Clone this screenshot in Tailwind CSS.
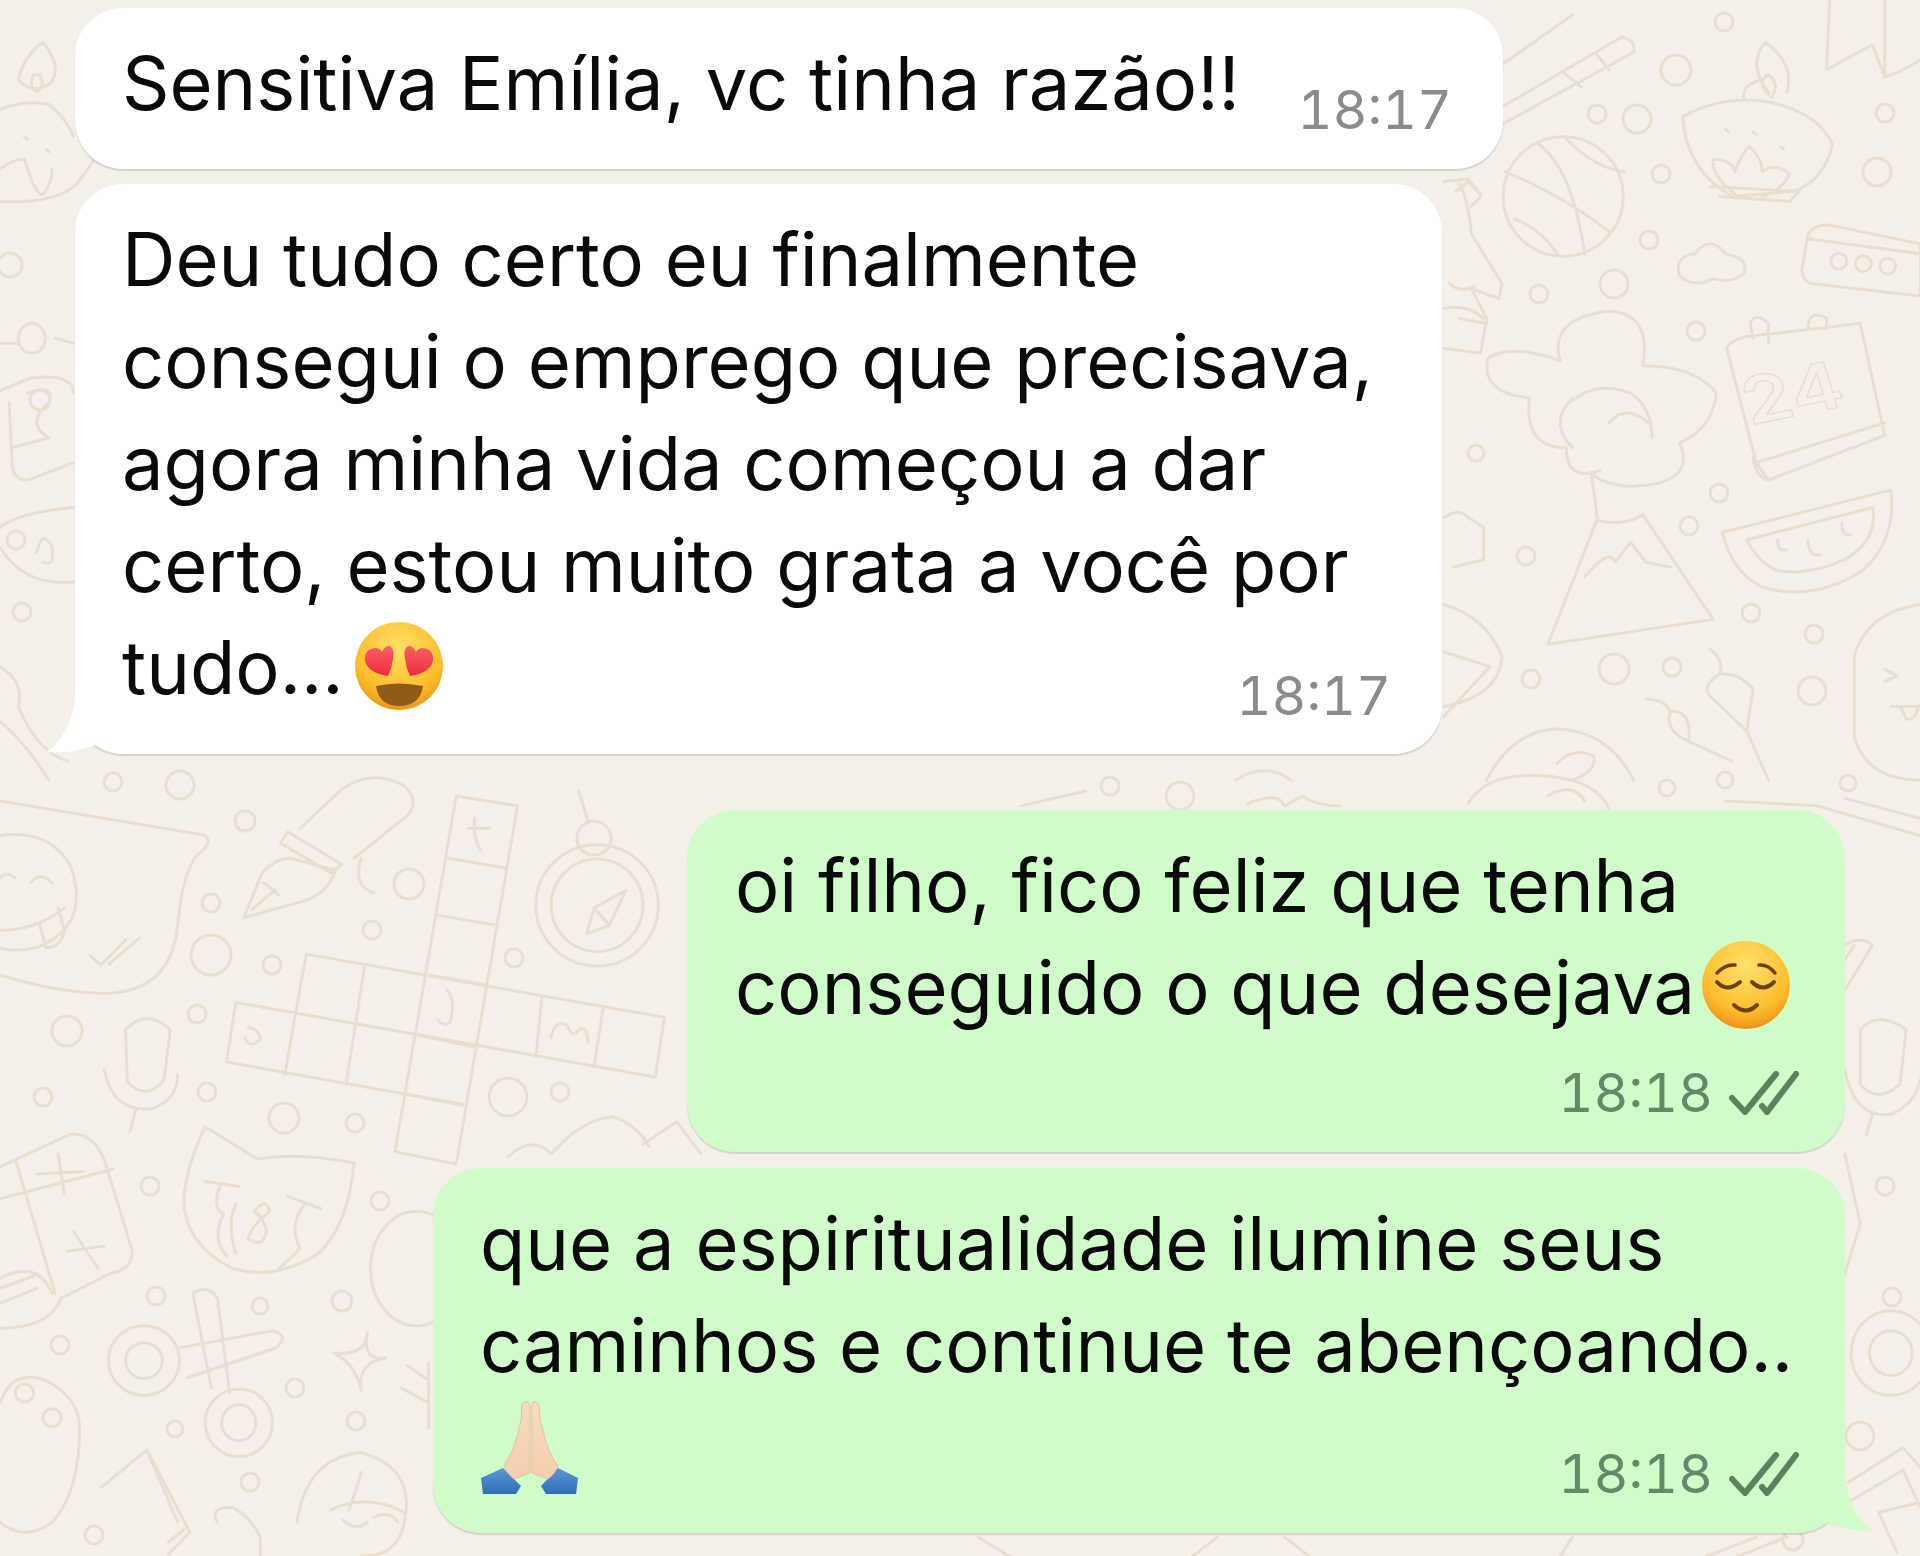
<!DOCTYPE html>
<html lang="pt-BR">
<head>
  <meta charset="UTF-8">
  <title>Conversa</title>
  <script src="https://cdn.jsdelivr.net/npm/@tailwindcss/browser@4"></script>
</head>
<body class="relative w-[1920px] h-[1556px] overflow-hidden bg-[#f4f0e9] font-['Inter',sans-serif] text-[#0a0a0a]">
  <!-- doodles do papel de parede -->
  <svg class="absolute inset-0" width="1920" height="1556" viewBox="0 0 1920 1556" fill="none" stroke="#e9decf" stroke-width="3" stroke-linecap="round" stroke-linejoin="round">
    <!-- bolinhas -->
    <g>
      <circle cx="211" cy="955" r="20"/><circle cx="272" cy="965" r="9"/><circle cx="211" cy="903" r="9"/><circle cx="245" cy="821" r="10"/>
      <circle cx="67" cy="1031" r="15"/><circle cx="197" cy="1014" r="9"/><circle cx="207" cy="1092" r="9"/><circle cx="43" cy="1097" r="9"/>
      <circle cx="284" cy="1118" r="15"/><circle cx="355" cy="1123" r="9"/><circle cx="372" cy="930" r="9"/><circle cx="409" cy="884" r="15"/>
      <circle cx="514" cy="958" r="9"/><circle cx="508" cy="1097" r="19"/><circle cx="560" cy="1092" r="9"/><circle cx="150" cy="1186" r="9"/>
      <circle cx="380" cy="1201" r="9"/><circle cx="156" cy="1296" r="9"/><circle cx="260" cy="1306" r="8"/><circle cx="342" cy="1301" r="10"/>
      <circle cx="60" cy="1345" r="9"/><circle cx="295" cy="1388" r="9"/><circle cx="175" cy="1429" r="8"/><circle cx="356" cy="1421" r="9"/>
      <circle cx="250" cy="1482" r="9"/><circle cx="94" cy="1535" r="9"/>
      <circle cx="1676" cy="70" r="15"/><circle cx="1597" cy="114" r="9"/><circle cx="1637" cy="119" r="14"/><circle cx="1661" cy="174" r="9"/>
      <circle cx="1724" cy="22" r="9"/><circle cx="1885" cy="113" r="9"/><circle cx="1877" cy="172" r="14"/><circle cx="1649" cy="240" r="9"/>
      <circle cx="1614" cy="284" r="14"/><circle cx="1539" cy="294" r="9"/><circle cx="1696" cy="331" r="9"/><circle cx="1476" cy="453" r="8"/>
      <circle cx="1719" cy="493" r="9"/><circle cx="1689" cy="526" r="9"/><circle cx="1526" cy="556" r="9"/><circle cx="1751" cy="613" r="9"/>
      <circle cx="1814" cy="634" r="9"/><circle cx="1614" cy="669" r="15"/><circle cx="1672" cy="667" r="9"/><circle cx="1531" cy="679" r="9"/>
      <circle cx="1812" cy="691" r="14"/><circle cx="1885" cy="1186" r="9"/><circle cx="1892" cy="1297" r="9"/><circle cx="1667" cy="788" r="8"/>
      <circle cx="1110" cy="786" r="9"/><circle cx="1180" cy="796" r="14"/><circle cx="1848" cy="783" r="8"/><circle cx="1725" cy="780" r="8"/>
      <circle cx="113" cy="782" r="9"/><circle cx="180" cy="785" r="14"/><circle cx="1860" cy="1436" r="14"/><circle cx="1793" cy="1540" r="10"/>
      <circle cx="16" cy="540" r="9"/><circle cx="10" cy="265" r="12"/><circle cx="22" cy="612" r="9"/><circle cx="40" cy="400" r="10"/>
    </g>

    <!-- quadrante inferior esquerdo: coordenadas do recorte -->
    <g transform="translate(0 776) scale(.6124 .4975)">
      <path vector-effect="non-scaling-stroke" d="M0 50 L330 118 Q350 128 330 150 Q300 175 290 300 Q280 435 170 437 Q90 435 0 400"/>
      <path vector-effect="non-scaling-stroke" d="M0 120 Q80 105 115 180 Q150 300 60 345 Q20 355 0 345 M0 205 Q10 190 25 205 M50 215 Q65 190 85 215 M0 310 Q60 310 105 265 M65 300 L75 345 Q100 345 105 310 L95 265"/>
      <path vector-effect="non-scaling-stroke" d="M148 362 L165 380 L205 330 M178 378 L228 325"/>
      <path vector-effect="non-scaling-stroke" d="M398 285 L428 195 Q450 165 475 165 L548 190 Q535 235 500 250 Z M412 268 L450 228 M430 215 Q445 225 455 240 M470 112 L558 178 L540 195 L458 135 Z M490 105 L560 25 Q610 -15 660 20 Q690 55 660 85 L578 165 M590 165 Q575 220 610 235"/>
      <path vector-effect="non-scaling-stroke" d="M745 40 L645 755 L745 780 L845 60 Z M730 165 L825 185 M715 280 L810 300 M700 400 L795 420 M680 520 L775 545 M665 640 L755 662"/>
      <path vector-effect="non-scaling-stroke" d="M500 358 L1085 485 L1070 605 L385 455 L370 575 L755 660 M500 358 L465 600 M595 385 L565 620 M885 445 L875 565 M985 465 L970 585"/>
      <path vector-effect="non-scaling-stroke" d="M775 85 Q772 125 785 150 M765 105 L800 105 M730 430 Q745 450 735 495 Q725 505 715 490 M405 505 Q425 510 425 530 Q405 550 400 525 M900 525 Q905 490 925 500 Q935 530 945 510 Q960 500 960 535"/>
      <ellipse vector-effect="non-scaling-stroke" cx="975" cy="260" rx="100" ry="122"/>
      <ellipse vector-effect="non-scaling-stroke" cx="975" cy="260" rx="75" ry="93"/>
      <ellipse vector-effect="non-scaling-stroke" cx="970" cy="125" rx="28" ry="34"/>
      <path vector-effect="non-scaling-stroke" d="M1022 230 L995 300 L958 318 L970 265 Z M970 265 L995 300 M945 30 L960 90"/>
      <path vector-effect="non-scaling-stroke" d="M205 510 Q240 465 278 510 L268 610 Q240 655 208 615 Z M170 590 Q185 680 250 668 Q290 650 290 600 M222 670 L212 715"/>
      <path vector-effect="non-scaling-stroke" d="M335 705 L420 770 Q490 755 578 778 Q570 900 520 960 Q450 1015 380 990 Q300 940 300 850 Q305 780 335 705 Z"/>
      <path vector-effect="non-scaling-stroke" d="M335 815 L390 825 M360 820 Q345 870 365 880 Q345 930 370 965 M385 860 Q370 900 385 960 M470 845 L525 870 M498 860 Q470 900 490 950 Q470 975 455 990 M415 875 Q435 845 440 875 Q410 905 405 930 Q430 950 435 915 Q430 885 415 875"/>
      <path vector-effect="non-scaling-stroke" d="M0 785 L115 720 Q150 715 170 770 L215 950 Q220 990 180 1000 L100 1050 Q80 1110 0 1110 M25 770 L90 1040 M0 850 L185 790 M60 800 L135 795 M95 760 L105 840 M110 955 L170 945 M120 915 L160 990 M0 1010 Q60 970 85 1040 M0 1030 L55 1005 M0 1060 L60 1030"/>
      <ellipse vector-effect="non-scaling-stroke" cx="235" cy="1175" rx="58" ry="70"/>
      <ellipse vector-effect="non-scaling-stroke" cx="235" cy="1175" rx="30" ry="36"/>
      <ellipse vector-effect="non-scaling-stroke" cx="390" cy="1300" rx="55" ry="68"/>
      <ellipse vector-effect="non-scaling-stroke" cx="390" cy="1300" rx="28" ry="36"/>
      <path vector-effect="non-scaling-stroke" d="M290 1150 L445 1115 Q475 1125 450 1150 L305 1210 M315 1040 Q340 1020 355 1050 L375 1240 M345 1230 L315 1040"/>
      <path vector-effect="non-scaling-stroke" d="M600 1118 Q590 1175 630 1170 Q582 1180 590 1235 Q580 1180 545 1160 Q600 1165 600 1118 Z"/>
      <path vector-effect="non-scaling-stroke" d="M665 1185 L700 1215 M655 1230 L700 1260 M700 1180 L700 1310"/>
      <path vector-effect="non-scaling-stroke" d="M0 1260 Q20 1190 75 1215 Q130 1250 130 1310 Q130 1440 85 1500 Q40 1540 0 1500"/>
      <ellipse vector-effect="non-scaling-stroke" cx="40" cy="1240" rx="15" ry="18"/>
      <ellipse vector-effect="non-scaling-stroke" cx="85" cy="1290" rx="15" ry="18"/>
      <path vector-effect="non-scaling-stroke" d="M165 1430 L240 1355 L310 1520 L275 1565 M240 1355 L290 1500 M275 1540 L300 1515"/>
      <path vector-effect="non-scaling-stroke" d="M485 1500 Q500 1370 590 1360 Q680 1390 660 1500 Q650 1570 590 1568 M590 1400 Q580 1440 570 1475 M540 1475 Q600 1440 660 1480 M560 1495 Q580 1520 600 1500 M610 1490 Q635 1475 650 1500 M355 1500 Q340 1470 380 1470 Q410 1490 425 1530 L425 1568"/>
      <path vector-effect="non-scaling-stroke" d="M830 765 Q870 720 900 760 Q950 690 1000 685 Q1040 700 1060 745 M1050 740 L1105 695 L1145 760"/>
      <ellipse vector-effect="non-scaling-stroke" cx="680" cy="990" rx="75" ry="115"/>
    </g>

    <!-- quadrante superior direito -->
    <g transform="translate(960 0) scale(.6124 .4975)">
      <path vector-effect="non-scaling-stroke" d="M885 130 L1000 30 M885 215 L1080 75 Q1105 80 1100 105 L885 250 M985 145 L1015 175 M1040 110 L1060 140"/>
      <ellipse vector-effect="non-scaling-stroke" cx="985" cy="395" rx="98" ry="120"/>
      <path vector-effect="non-scaling-stroke" d="M890 345 Q980 390 1060 465 M945 290 Q1000 340 1020 510 M905 440 Q950 460 975 510 M990 280 Q1040 340 1085 345"/>
      <path vector-effect="non-scaling-stroke" d="M1180 235 Q1245 190 1320 205 Q1400 225 1425 290 Q1410 365 1360 385 L1260 395 Q1185 340 1180 235 Z M1225 375 L1370 385 L1355 405 L1240 395 M1280 200 Q1275 170 1310 160 M1320 185 Q1285 130 1315 85 Q1365 130 1350 185 M1320 190 Q1300 165 1320 150 Q1340 170 1325 195 M1265 390 Q1225 350 1230 320 Q1260 320 1265 345 Q1280 300 1290 295 Q1310 320 1310 345 Q1330 325 1355 350 Q1340 385 1310 395"/>
      <path vector-effect="non-scaling-stroke" d="M1295 265 L1300 270 M1250 260 L1255 265 M1340 295 L1345 300"/>
      <path vector-effect="non-scaling-stroke" d="M1420 0 L1415 140 L1490 90 L1510 155 Q1545 140 1568 120 M1510 0 L1510 150"/>
      <path vector-effect="non-scaling-stroke" d="M1375 540 L1385 470 Q1400 445 1430 455 L1568 490 L1568 595 L1390 570 Q1375 565 1375 540 Z M1385 480 L1568 510"/>
      <ellipse vector-effect="non-scaling-stroke" cx="1435" cy="525" rx="13" ry="16"/>
      <ellipse vector-effect="non-scaling-stroke" cx="1475" cy="530" rx="13" ry="16"/>
      <ellipse vector-effect="non-scaling-stroke" cx="1515" cy="535" rx="13" ry="16"/>
      <path vector-effect="non-scaling-stroke" d="M1175 555 Q1165 515 1200 510 Q1225 470 1250 510 Q1290 520 1280 550 Q1260 570 1230 560 Q1200 580 1175 555 Z"/>
      <path vector-effect="non-scaling-stroke" d="M790 365 L830 360 L850 390 M815 370 Q830 400 835 470 L885 570 L880 600 L835 580 L860 640 L850 710 L790 700 M815 640 L860 650 M790 620 Q830 610 855 640 M800 570 Q815 590 840 575 M810 385 L830 365 L845 385 M850 395 L835 415"/>
      <path vector-effect="non-scaling-stroke" d="M1045 945 Q990 970 990 900 Q920 900 930 800 Q850 790 862 720 Q900 690 980 725 Q960 640 1060 625 Q1130 630 1115 735 Q1200 735 1235 790 Q1230 860 1175 890 Q1200 960 1125 975 Q1060 985 1030 950 M1000 800 Q960 850 1000 900 M1000 805 Q1040 765 1095 790 Q1130 820 1130 880 M1060 850 Q1085 810 1125 850 M1030 950 Q1040 1020 1040 1045 L960 1295 L1230 1245 L1115 1035 Q1080 1060 1040 1045 M1020 1160 Q1060 1100 1070 1130 L1095 1090 L1120 1130 L1160 1140"/>
      <path vector-effect="non-scaling-stroke" d="M1252 700 Q1260 680 1295 675 L1470 650 L1510 875 L1320 965 L1300 930 Z M1300 930 L1510 850 M1295 680 L1290 650 Q1300 625 1320 650 L1320 690 M1385 660 Q1385 620 1415 640 L1415 660 M1320 965 Q1300 960 1295 920"/>
      <text x="1290" y="855" font-family="Inter,sans-serif" font-size="130" font-weight="600" fill="none" stroke="#e9decf" stroke-width="1.5" vector-effect="non-scaling-stroke" transform="rotate(-14 1290 855)">24</text>
      <path vector-effect="non-scaling-stroke" d="M1245 1070 L1520 985 Q1530 1090 1470 1150 Q1390 1210 1310 1180 Q1260 1150 1245 1070 Z M1285 1085 L1490 1020 Q1500 1085 1445 1125 Q1380 1160 1330 1145 Q1300 1125 1285 1085 Z M1335 1085 Q1335 1110 1350 1105 M1385 1085 Q1385 1120 1405 1115 M1440 1050 Q1440 1080 1455 1075"/>
      <path vector-effect="non-scaling-stroke" d="M790 1040 Q815 1020 830 1040 L855 1060 L855 1125 L805 1140 M790 1215 Q860 1240 885 1320 Q880 1400 790 1420 M790 1310 L865 1340 L790 1440"/>
      <path vector-effect="non-scaling-stroke" d="M1225 1305 Q1250 1330 1240 1355 Q1210 1380 1225 1400 Q1260 1440 1285 1470 L1320 1568 M1245 1355 Q1275 1355 1295 1385 Q1290 1420 1285 1470 M1120 1405 Q1150 1405 1160 1430 Q1150 1470 1190 1490 L1260 1530 M1160 1430 Q1195 1425 1190 1490"/>
      <path vector-effect="non-scaling-stroke" d="M1460 1320 Q1480 1230 1568 1215 M1460 1320 L1460 1480 Q1480 1568 1568 1568 M1510 1345 L1530 1358 L1510 1370 M1520 1420 L1568 1420 M1535 1420 L1545 1445 Q1560 1450 1565 1420"/>
      <path vector-effect="non-scaling-stroke" d="M860 1568 Q900 1470 975 1465 Q1060 1470 1100 1568 M975 1535 Q1000 1500 1035 1520 Q1040 1550 1000 1568 M450 1568 Q500 1530 540 1568"/>
    </g>

    <!-- quadrante superior esquerdo, borda -->
    <g transform="translate(0 0) scale(.6124 .4975)">
      <path vector-effect="non-scaling-stroke" d="M70 85 Q40 110 30 160 Q50 190 80 170 Q105 140 70 85 Z M55 150 Q45 175 60 185 Q75 175 65 150 Z M0 220 Q40 200 80 210 Q110 240 120 275 M40 275 L45 280 M75 300 L80 305 M0 405 Q90 410 125 370 L155 320 M0 340 Q20 320 40 320 Q60 400 70 390 Q85 370 85 340"/>
      <path vector-effect="non-scaling-stroke" d="M0 690 L30 690 M90 680 L120 690 M0 785 L50 760 Q120 750 120 790 M120 930 L45 965 Q25 965 20 940 L15 810 M45 790 Q90 770 80 810 Q40 850 80 880 L20 900 M0 1060 Q30 1030 120 1020 M0 1100 Q40 1180 120 1170 M60 1110 Q70 1060 85 1100 Q90 1140 70 1130"/>
      <path vector-effect="non-scaling-stroke" d="M0 1340 Q40 1370 30 1420 Q60 1510 110 1530 M0 1450 Q40 1490 80 1568"/>
      <ellipse vector-effect="non-scaling-stroke" cx="52" cy="680" rx="22" ry="30"/>
    </g>

    <!-- faixa entre balões e canto inferior direito -->
    <g transform="translate(960 776) scale(.6124 .4975)">
      <path vector-effect="non-scaling-stroke" d="M100 60 L205 30 M470 55 Q520 30 530 60 L560 40 Q580 60 620 60 M830 55 Q860 -10 960 0 Q1040 10 1060 65 M960 40 Q1000 10 1020 50 M1250 50 L1400 60 L1568 120 M1445 45 L1568 85"/>
      <path vector-effect="non-scaling-stroke" d="M1445 340 Q1470 320 1490 340 L1445 430 M1460 340 L1445 370"/>
      <path vector-effect="non-scaling-stroke" d="M1470 510 Q1500 470 1545 510 L1535 620 Q1500 660 1470 620 Z M1445 590 Q1460 690 1520 680 Q1560 660 1568 610 M1490 680 L1480 720"/>
      <path vector-effect="non-scaling-stroke" d="M1445 760 L1470 900 L1445 1000"/>
      <ellipse vector-effect="non-scaling-stroke" cx="1520" cy="1160" rx="65" ry="85"/>
      <ellipse vector-effect="non-scaling-stroke" cx="1520" cy="1160" rx="35" ry="45"/>
      <path vector-effect="non-scaling-stroke" d="M1450 1420 L1540 1350 L1568 1390 M1450 1460 L1540 1395 L1568 1470 M1530 1560 L1500 1480 L1568 1460"/>
      <path vector-effect="non-scaling-stroke" d="M30 1530 L80 1568 M530 1530 L570 1568 M1000 1530 L980 1568 M1300 1530 L1220 1568 M1350 1530 L1270 1568 M420 1530 L380 1568"/>
    </g>
  </svg>

  <main class="relative flex flex-col pt-2 text-[74px] leading-[102px]">
    <!-- recebidas -->
    <div class="relative ml-[75px] w-[1428px] h-[161px] rounded-[48px] bg-white pl-[47px] pt-[24px] shadow-[0_2px_1px_rgba(120,110,95,0.22)] whitespace-nowrap">
      <p>Sensitiva Emília, vc tinha razão!!</p>
      <span class="absolute right-[51px] bottom-[32px] text-[54px] leading-none tabular-nums text-[#8b8b8b]">18:17</span>
    </div>

    <div class="relative mt-[15px] ml-[75px] w-[1367px] h-[570px] rounded-[48px] bg-white pl-[47px] pt-[24px] shadow-[0_2px_1px_rgba(120,110,95,0.22)] whitespace-nowrap">
      <svg class="absolute left-[-30px] bottom-0" width="70" height="64" viewBox="0 0 70 64"><path d="M30 0 Q30 40 2 62 Q30 64 50 55 L70 62 L70 0 Z" fill="#fff"/></svg>
      <p class="relative">Deu tudo certo eu finalmente<br>consegui o emprego que precisava,<br>agora minha vida começou a dar<br>certo, estou muito grata a você por<br>tudo...<svg class="inline align-[15px] -my-8 ml-[10px]" width="90" height="90" viewBox="0 0 90 90">
        <defs>
          <radialGradient id="rosto1" cx="50%" cy="30%" r="70%"><stop offset="0" stop-color="#ffe067"/><stop offset=".72" stop-color="#fdbe2c"/><stop offset="1" stop-color="#ee9518"/></radialGradient>
          <linearGradient id="coracao" x1="0" y1="0" x2="0" y2="1"><stop offset="0" stop-color="#fb6168"/><stop offset="1" stop-color="#ee2b3a"/></linearGradient>
        </defs>
        <circle cx="45" cy="45" r="44" fill="url(#rosto1)"/>
        <path d="M34 55 Q14 52 11 40 Q10 28 21 27 Q26 27 28 31 Q31 24 36 25 Q41 28 39 38 Q38 47 34 55 Z" fill="url(#coracao)"/>
        <path d="M56 55 Q76 52 79 40 Q80 28 69 27 Q64 27 62 31 Q59 24 54 25 Q49 28 51 38 Q52 47 56 55 Z" fill="url(#coracao)"/>
        <path d="M22 65 Q45 60 69 65 Q66 85 45 85 Q25 85 22 65 Z" fill="#8f5c17"/>
      </svg></p>
      <span class="absolute right-[51px] bottom-[31px] text-[54px] leading-none tabular-nums text-[#8b8b8b]">18:17</span>
    </div>

    <!-- enviadas -->
    <div class="relative mt-[56px] self-end mr-[75px] w-[1158px] h-[342px] rounded-[48px] bg-[#cffcc9] pl-[48px] pt-[24px] shadow-[0_2px_1px_rgba(120,110,95,0.22)] whitespace-nowrap">
      <p>oi filho, fico feliz que tenha<br>conseguido o que desejava<svg class="inline align-[16px] -my-8 ml-[6px]" width="90" height="90" viewBox="0 0 90 90">
        <defs>
          <radialGradient id="rosto2" cx="50%" cy="28%" r="72%"><stop offset="0" stop-color="#ffe26f"/><stop offset=".72" stop-color="#fdbd2c"/><stop offset="1" stop-color="#ee9318"/></radialGradient>
        </defs>
        <circle cx="45" cy="45" r="44" fill="url(#rosto2)"/>
        <g fill="none" stroke="#6b430f" stroke-width="4" stroke-linecap="round">
          <path d="M16 33 Q24 24 34 25 M74 33 Q67 24 58 25" stroke-width="3.5"/>
          <path d="M16 42 Q26 53 39 42 M73 42 Q62 53 51 42"/>
          <path d="M33 65 Q45 76 56 65"/>
        </g>
      </svg></p>
      <span class="absolute right-[46px] bottom-[32px] flex items-end gap-[16px] text-[54px] leading-none tabular-nums text-[#608a68]">18:18
        <svg class="mb-[5px]" width="70" height="44" viewBox="0 0 70 44" fill="none" stroke="#5a8362" stroke-width="6" stroke-linecap="round" stroke-linejoin="round"><path d="M3 27 L16 41 L47 3 M33 35 L38 41 L67 3"/></svg>
      </span>
    </div>

    <div class="relative mt-[16px] self-end mr-[75px] w-[1412px] h-[365px] rounded-[48px] bg-[#cffcc9] pl-[47px] pt-[24px] shadow-[0_2px_1px_rgba(120,110,95,0.22)] whitespace-nowrap">
      <svg class="absolute right-[-28px] bottom-0" width="70" height="60" viewBox="0 0 70 60"><path d="M42 0 Q44 40 70 58 Q40 58 18 48 L0 58 L0 0 Z" fill="#cffcc9"/></svg>
      <p class="relative">que a espiritualidade ilumine seus<br>caminhos e continue te abençoando..</p>
      <svg class="relative mt-[4px] ml-[1px]" width="98" height="96" viewBox="0 0 98 94">
        <defs>
          <linearGradient id="mao" x1="0" y1="0" x2="0" y2="1"><stop offset="0" stop-color="#fbdcc0"/><stop offset="1" stop-color="#f4cfae"/></linearGradient>
          <linearGradient id="manga" x1="0" y1="0" x2="0" y2="1"><stop offset="0" stop-color="#5a97d8"/><stop offset="1" stop-color="#2f6fb4"/></linearGradient>
        </defs>
        <path d="M0 77 L22 67 L40 85 L35 93 L2 93 Z" fill="url(#manga)"/>
        <path d="M97 77 L77 67 L60 85 L65 93 L95 93 Z" fill="url(#manga)"/>
        <path d="M47 1 Q42 0 41 5 Q41 20 37 33 Q33 50 23 65 Q26 73 33 78 L49 72 L49 5 Z" fill="url(#mao)" stroke="#e9bf9c" stroke-width="1"/>
        <path d="M52 1 Q57 0 58 5 Q58 20 63 33 Q66 50 77 65 Q74 73 67 78 L51 72 L51 5 Z" fill="url(#mao)" stroke="#e9bf9c" stroke-width="1"/>
      </svg>
      <span class="absolute right-[46px] bottom-[32px] flex items-end gap-[16px] text-[54px] leading-none tabular-nums text-[#608a68]">18:18
        <svg class="mb-[5px]" width="70" height="44" viewBox="0 0 70 44" fill="none" stroke="#5a8362" stroke-width="6" stroke-linecap="round" stroke-linejoin="round"><path d="M3 27 L16 41 L47 3 M33 35 L38 41 L67 3"/></svg>
      </span>
    </div>
  </main>
</body>
</html>
